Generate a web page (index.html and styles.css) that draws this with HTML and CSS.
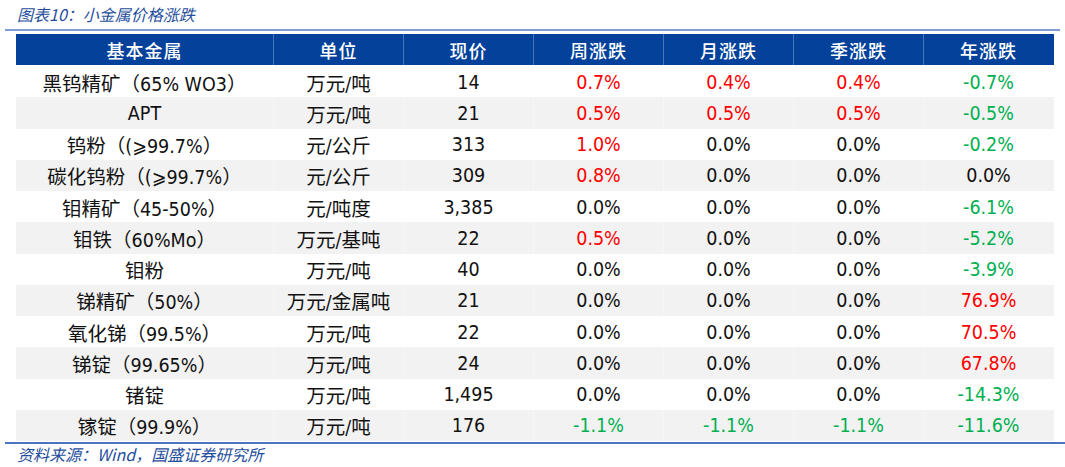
FILE: index.html
```html
<!DOCTYPE html>
<html lang="zh-CN">
<head>
<meta charset="utf-8">
<link rel="stylesheet" href="styles.css">
</head>
<body>
<div class="page">
  <div class="title">图表10：小金属价格涨跌</div>
  <div class="rule-top"></div>
  <div class="table">
    <div class="row head">
      <div class="c">基本金属</div><div class="c">单位</div><div class="c">现价</div><div class="c">周涨跌</div><div class="c">月涨跌</div><div class="c">季涨跌</div><div class="c">年涨跌</div>
    </div>
    <div class="row">
      <div class="c">黑钨精矿（65% WO3）</div><div class="c">万元/吨</div><div class="c">14</div><div class="c up">0.7%</div><div class="c up">0.4%</div><div class="c up">0.4%</div><div class="c dn">-0.7%</div>
    </div>
    <div class="row alt">
      <div class="c">APT</div><div class="c">万元/吨</div><div class="c">21</div><div class="c up">0.5%</div><div class="c up">0.5%</div><div class="c up">0.5%</div><div class="c dn">-0.5%</div>
    </div>
    <div class="row">
      <div class="c">钨粉（(⩾99.7%）</div><div class="c">元/公斤</div><div class="c">313</div><div class="c up">1.0%</div><div class="c">0.0%</div><div class="c">0.0%</div><div class="c dn">-0.2%</div>
    </div>
    <div class="row alt">
      <div class="c">碳化钨粉（(⩾99.7%）</div><div class="c">元/公斤</div><div class="c">309</div><div class="c up">0.8%</div><div class="c">0.0%</div><div class="c">0.0%</div><div class="c">0.0%</div>
    </div>
    <div class="row">
      <div class="c">钼精矿（45-50%）</div><div class="c">元/吨度</div><div class="c">3,385</div><div class="c">0.0%</div><div class="c">0.0%</div><div class="c">0.0%</div><div class="c dn">-6.1%</div>
    </div>
    <div class="row alt">
      <div class="c">钼铁（60%Mo）</div><div class="c">万元/基吨</div><div class="c">22</div><div class="c up">0.5%</div><div class="c">0.0%</div><div class="c">0.0%</div><div class="c dn">-5.2%</div>
    </div>
    <div class="row">
      <div class="c">钼粉</div><div class="c">万元/吨</div><div class="c">40</div><div class="c">0.0%</div><div class="c">0.0%</div><div class="c">0.0%</div><div class="c dn">-3.9%</div>
    </div>
    <div class="row alt">
      <div class="c">锑精矿（50%）</div><div class="c">万元/金属吨</div><div class="c">21</div><div class="c">0.0%</div><div class="c">0.0%</div><div class="c">0.0%</div><div class="c up">76.9%</div>
    </div>
    <div class="row">
      <div class="c">氧化锑（99.5%）</div><div class="c">万元/吨</div><div class="c">22</div><div class="c">0.0%</div><div class="c">0.0%</div><div class="c">0.0%</div><div class="c up">70.5%</div>
    </div>
    <div class="row alt">
      <div class="c">锑锭（99.65%）</div><div class="c">万元/吨</div><div class="c">24</div><div class="c">0.0%</div><div class="c">0.0%</div><div class="c">0.0%</div><div class="c up">67.8%</div>
    </div>
    <div class="row">
      <div class="c">锗锭</div><div class="c">万元/吨</div><div class="c">1,495</div><div class="c">0.0%</div><div class="c">0.0%</div><div class="c">0.0%</div><div class="c dn">-14.3%</div>
    </div>
    <div class="row alt">
      <div class="c">镓锭（99.9%）</div><div class="c">万元/吨</div><div class="c">176</div><div class="c dn">-1.1%</div><div class="c dn">-1.1%</div><div class="c dn">-1.1%</div><div class="c dn">-11.6%</div>
    </div>
  </div>
  <div class="rule-bottom"></div>
  <div class="source">资料来源：Wind，国盛证券研究所</div>
</div>
</body>
</html>
```

FILE: styles.css
```css
html, body {
  margin: 0;
  padding: 0;
  background: #ffffff;
}

.page {
  width: 1065px;
  height: 467px;
  overflow: hidden;
}

.title {
  height: 29px;
  padding-left: 17px;
  line-height: 28px;
  font-family: "Noto Sans CJK SC", sans-serif;
  font-style: italic;
  font-size: 16px;
  color: #1f4e9c;
}

.rule-top {
  margin: 0 5px 0 5px;
  height: 2px;
  background: #7e9dd0;
}

.table {
  margin: 3px 0 0 16px;
  width: 1038px;
}

.row {
  display: grid;
  grid-template-columns: 257px repeat(6, 130px);
  height: 31.25px;
  align-items: stretch;
}

.row.head {
  height: 31px;
  margin-bottom: 1px;
  background: #03419a;
}

.row.alt {
  background: #f2f2f2;
}

.c {
  display: flex;
  align-items: center;
  justify-content: center;
  padding-top: 1px;
  font-family: "DejaVu Sans Condensed", "DejaVu Sans", "Noto Sans CJK SC", sans-serif;
  font-size: 19.5px;
  color: #111111;
  white-space: nowrap;
}

.row .c:not(:first-child) {
  border-left: 1px solid transparent;
}

.row.alt .c:not(:first-child) {
  border-left-color: #f6f6f6;
}

.row.head .c {
  padding-top: 0;
  color: #ffffff;
  font-family: "Noto Sans CJK SC", sans-serif;
  font-weight: 500;
  font-size: 18px;
  letter-spacing: 1px;
}

.row.head .c:not(:first-child) {
  border-left: 1px solid #4a74b8;
}

.up {
  color: #ff0000;
}

.dn {
  color: #00b050;
}

.rule-bottom {
  margin: 1px 0 0 5px;
  height: 2px;
  background: #4a74c0;
}

.source {
  padding-left: 17px;
  line-height: 20px;
  font-family: "Noto Sans CJK SC", sans-serif;
  font-style: italic;
  font-size: 16px;
  color: #1f4e9c;
}
```
